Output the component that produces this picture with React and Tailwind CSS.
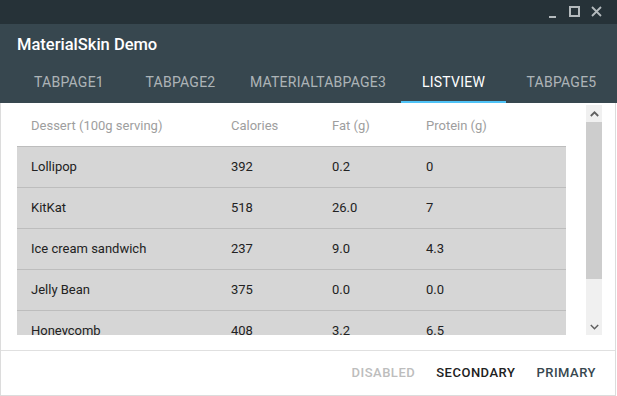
import React from "react";

const rows = [
  ["Lollipop", "392", "0.2", "0"],
  ["KitKat", "518", "26.0", "7"],
  ["Ice cream sandwich", "237", "9.0", "4.3"],
  ["Jelly Bean", "375", "0.0", "0.0"],
  ["Honeycomb", "408", "3.2", "6.5"],
];

const tabs = [
  { label: "TabPage1", w: "w-[114px]" },
  { label: "TabPage2", w: "w-[109px]" },
  { label: "MaterialTabPage3", w: "w-[166px]" },
  { label: "ListView", w: "w-[105px]", active: true },
  { label: "TabPage5", w: "w-[111px]" },
];

function Cells({ cells }) {
  return (
    <>
      <div className="w-[214px] pl-[14px]">{cells[0]}</div>
      <div className="w-[101px]">{cells[1]}</div>
      <div className="w-[94px]">{cells[2]}</div>
      <div className="flex-1">{cells[3]}</div>
    </>
  );
}

export default function App() {
  return (
    <div className="w-[617px] h-[396px] bg-white font-['Roboto',sans-serif] flex flex-col overflow-hidden">
      {/* title bar */}
      <div className="h-[24px] shrink-0 bg-[#263238] flex items-center justify-end pr-[15px] gap-[11px] text-[#b4babd]">
        <svg width="11" height="12" viewBox="0 0 11 12">
          <rect x="2" y="10" width="7" height="2" fill="currentColor" />
        </svg>
        <svg width="11" height="12" viewBox="0 0 11 12">
          <rect x="1" y="1" width="9" height="9" fill="none" stroke="currentColor" strokeWidth="2" />
        </svg>
        <svg width="11" height="12" viewBox="0 0 11 12">
          <path d="M1 1 L10 10 M10 1 L1 10" stroke="currentColor" strokeWidth="1.8" />
        </svg>
      </div>

      {/* header */}
      <div className="bg-[#37474f] h-[79px] shrink-0 flex flex-col">
        <div className="h-[40px] pl-[17px] pt-[9px] text-white text-[16.5px] font-medium">MaterialSkin Demo</div>
        <div className="flex pl-[12px] h-[39px]">
          {tabs.map((t) => (
            <div key={t.label} className={`${t.w} flex flex-col`}>
              <div
                className={`flex-1 flex items-center justify-center uppercase text-[14px] tracking-[0.25px] ${
                  t.active ? "text-white" : "text-white/60"
                }`}
              >
                {t.label}
              </div>
              <div className={`h-[2px] ${t.active ? "bg-[#4fc3f7]" : ""}`} />
            </div>
          ))}
        </div>
      </div>

      {/* content */}
      <div className="flex-1 flex flex-col border-x border-b border-[#dcdcdc] w-[616px]">
        <div className="pt-[2px] pl-[16px] flex">
          <div className="w-[585px] h-[230px] flex">
            <div className="flex-1 overflow-hidden flex flex-col">
              <div className="w-[549px] h-[41px] shrink-0 flex items-center text-[13px] text-[#9e9e9e]">
                <Cells cells={["Dessert (100g serving)", "Calories", "Fat (g)", "Protein (g)"]} />
              </div>
              {rows.map((r) => (
                <div
                  key={r[0]}
                  className="w-[549px] h-[41px] shrink-0 flex items-center bg-[#d6d6d6] border-t border-[#bdbdbd] text-[13px] text-[#222222]"
                >
                  <Cells cells={r} />
                </div>
              ))}
            </div>
            {/* scrollbar */}
            <div className="w-[16px] bg-[#f0f0f0] flex flex-col">
              <div className="h-[17px] flex items-center justify-center">
                <svg width="9" height="6" viewBox="0 0 9 6">
                  <path d="M0.8 5 L4.5 1.3 L8.2 5" fill="none" stroke="#606060" strokeWidth="1.8" />
                </svg>
              </div>
              <div className="h-[157px] bg-[#cdcdcd]" />
              <div className="flex-1" />
              <div className="h-[17px] flex items-center justify-center">
                <svg width="9" height="6" viewBox="0 0 9 6">
                  <path d="M0.8 1 L4.5 4.7 L8.2 1" fill="none" stroke="#606060" strokeWidth="1.5" />
                </svg>
              </div>
            </div>
          </div>
        </div>
        <div className="mt-[15px] border-t border-[#e0e0e0] flex-1 flex items-center justify-end pr-[19px] gap-[21px] text-[13px] font-medium tracking-[0.5px] uppercase">
          <span className="text-[#bdbdbd]">Disabled</span>
          <span className="text-[#212121]">Secondary</span>
          <span className="text-[#37474f]">Primary</span>
        </div>
      </div>
    </div>
  );
}
